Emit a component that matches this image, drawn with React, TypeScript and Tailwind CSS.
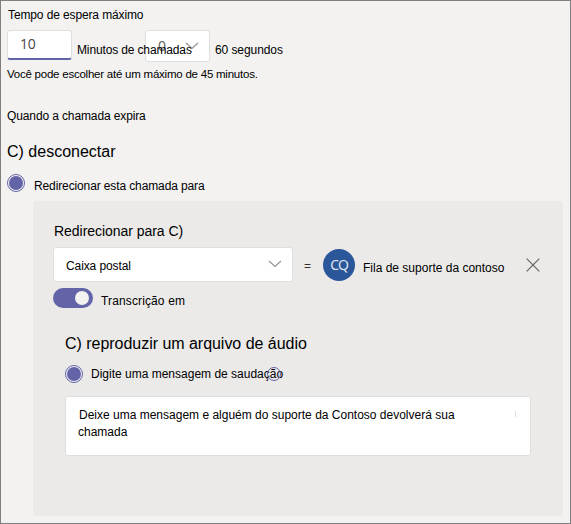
import type { ReactNode } from 'react';

function Radio() {
  return (
    <span className="flex size-[18px] shrink-0 items-center justify-center rounded-full border border-[#6264a7] bg-[#f3f2f1]">
      <span className="size-[14px] rounded-full bg-[#6264a7]" />
    </span>
  );
}

function Chevron() {
  return (
    <svg width="14" height="8" viewBox="0 0 14 8" fill="none" stroke="#979593" strokeWidth="1.2" className="shrink-0">
      <path d="M1 1l6 5.5 6-5.5" />
    </svg>
  );
}

function Label({ className, children }: { className: string; children: ReactNode }) {
  return <span className={`block whitespace-nowrap leading-4 ${className}`}>{children}</span>;
}

export default function App() {
  return (
    <main className="h-[524px] w-[571px] overflow-hidden border border-[#7f7f7f] bg-[#f3f2f1] pl-1.5 pt-1.5 font-['Liberation_Sans',Arial,sans-serif] text-xs text-black">
      <Label className="ml-px tracking-[-0.12px]">Tempo de espera máximo</Label>

      <div className="mt-[7px] flex h-8">
        <div className="h-[30px] w-[65px] rounded-[3px] border border-b-2 border-[#e1dfdd] border-b-[#6264a7] bg-white pl-3 pt-[3px] font-['Open_Sans',sans-serif] text-sm leading-5 tracking-[-0.3px] text-[#484644]">
          10
        </div>
        <div className="relative ml-[73px] flex h-8 w-[65px] justify-between rounded-[3px] border border-[#e1dfdd] bg-white pl-3 pr-[10px] pt-[5px] font-['Open_Sans',sans-serif] text-sm leading-5 text-[#605e5c]">
          <span>0</span>
          <span className="pt-[6px]"><Chevron /></span>
          <span className="absolute left-[-69px] top-[11px] whitespace-nowrap font-['Liberation_Sans',Arial,sans-serif] text-xs leading-4 tracking-[-0.14px] text-black">
            Minutos de chamadas
          </span>
        </div>
        <Label className="ml-[5px] mt-3 tracking-[-0.08px]">60 segundos</Label>
      </div>

      <Label className="mt-1 text-[11.5px] tracking-[-0.23px]">Você pode escolher até um máximo de 45 minutos.</Label>
      <Label className="mt-[26px] tracking-[-0.12px]">Quando a chamada expira</Label>

      <h2 className="mt-[18px] text-base leading-5">C) desconectar</h2>
      <div className="mt-3 flex h-[18px]">
        <Radio />
        <Label className="ml-[9px] mt-1 tracking-[-0.12px]">Redirecionar esta chamada para</Label>
      </div>

      <section className="ml-[26px] mt-[9px] h-[315px] w-[530px] rounded-[3px] bg-[#ebeae9] pl-5 pt-[22px]">
        <h3 className="ml-px text-sm leading-4 tracking-[-0.04px]">Redirecionar para C)</h3>
        <div className="mt-2 flex h-[35px]">
          <div className="flex w-60 justify-between rounded-[3px] border border-[#e1dfdd] bg-white pl-3 pr-[10px]">
            <Label className="mt-[10px] tracking-[-0.1px]">Caixa postal</Label>
            <span className="pt-3"><Chevron /></span>
          </div>
          <Label className="ml-[11px] mt-[11px] text-[#323130]">=</Label>
          <span className="ml-3 mt-0.5 flex size-8 items-center justify-center rounded-full bg-[#2b579a] font-['Open_Sans',sans-serif] text-sm leading-5 tracking-[-1px] text-[#e6ecf5]">
            CQ
          </span>
          <Label className="ml-2 mt-[13px]">Fila de suporte da contoso</Label>
          <svg width="14" height="14" viewBox="0 0 14 14" stroke="#605e5c" strokeWidth="1.1" className="ml-[22px] mt-[11px]">
            <path d="M.7.7l12.6 12.6M13.3.7L.7 13.3" />
          </svg>
        </div>
        <div className="mt-1.5 flex h-5">
          <span className="flex h-5 w-10 items-center justify-end rounded-full bg-[#6264a7] pr-1">
            <span className="size-[14px] rounded-full bg-[#f3f2f1]" />
          </span>
          <Label className="ml-2 mt-[5px] tracking-[0.13px]">Transcrição em</Label>
        </div>

        <div className="ml-3">
          <h2 className="mt-[26px] text-base leading-5 tracking-[-0.03px]">C) reproduzir um arquivo de áudio</h2>
          <div className="mt-[11px] flex h-[18px]">
            <Radio />
            <div className="relative ml-2 mt-px">
              <Label className="">Digite uma mensagem de saudação</Label>
              <span className="absolute left-[176px] top-px size-[14px] rounded-full border border-[#6264a7]" />
            </div>
          </div>
          <div className="mt-[13px] h-[60px] w-[466px] rounded-[3px] border border-[#e1dfdd] bg-white pl-3 pt-[10px]">
            <div className="flex">
              <Label className="ml-px">Deixe uma mensagem e alguém do suporte da Contoso devolverá sua</Label>
              <span className="ml-[60px] mt-1 h-1.5 w-px bg-[#e1dfdd]" />
            </div>
            <Label className="mt-px">chamada</Label>
          </div>
        </div>
      </section>
    </main>
  );
}
